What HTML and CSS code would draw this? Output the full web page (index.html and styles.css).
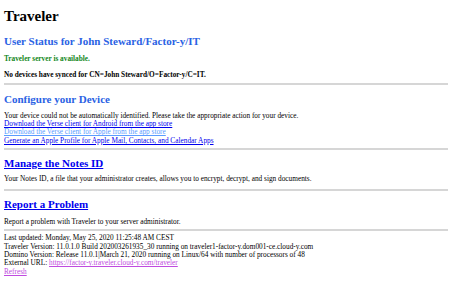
FILE: index.html
```html
<!DOCTYPE html>
<html>
<head>
<meta charset="utf-8">
<title>Traveler</title>
<link rel="stylesheet" href="styles.css">
</head>
<body class="page">
<h1 class="title">Traveler</h1>
<h2 class="section blue status">User Status for John Steward/Factor-y/IT</h2>
<h4 class="note green avail">Traveler server is available.</h4>
<h4 class="note synced">No devices have synced for CN=John Steward/O=Factor-y/C=IT.</h4>
<hr class="rule r1">
<h2 class="section blue after-rule">Configure your Device</h2>
<div class="text t-config">Your device could not be automatically identified. Please take the appropriate action for your device.<br>
<a class="link" href="#">Download the Verse client for Android from the app store</a><br>
<a class="link light" href="#">Download the Verse client for Apple from the app store</a><br>
<a class="link" href="#">Generate an Apple Profile for Apple Mail, Contacts, and Calendar Apps</a></div>
<hr class="rule r2">
<h2 class="section after-rule m-notes"><a class="link" href="#">Manage the Notes ID</a></h2>
<div class="text t-notes">Your Notes ID, a file that your administrator creates, allows you to encrypt, decrypt, and sign documents.</div>
<hr class="rule r3">
<h2 class="section after-rule m-report"><a class="link" href="#">Report a Problem</a></h2>
<div class="text t-report">Report a problem with Traveler to your server administrator.</div>
<hr class="rule r4">
<div class="text t-footer">Last updated: Monday, May 25, 2020 11:25:48 AM CEST<br>
Traveler Version: 11.0.1.0 Build 202003261935_30 running on traveler1-factor-y.dom001-ce.cloud-y.com<br>
Domino Version: Release 11.0.1|March 21, 2020 running on Linux/64 with number of processors of 48<br>
External URL: <a class="link visited" href="#">https://factor-y.traveler.cloud-y.com/traveler</a><br>
<a class="link visited" href="#">Refresh</a></div>
</body>
</html>
```
FILE: styles.css
```css
html { background: #fff; }
.page {
  margin: 0;
  padding: 0 4px;
  font-family: "Liberation Serif", "Times New Roman", serif;
  font-size: 7.3px;
  color: #000;
}
.page > * { margin-bottom: 0; }
.title {
  font-size: 15px;
  line-height: 17px;
  font-weight: bold;
  margin-top: 8.4px;
}
.section {
  font-size: 11px;
  line-height: 13px;
  font-weight: bold;
}
.status { margin-top: 9.6px; }
.after-rule { margin-top: 7.4px; }
.m-notes { margin-top: 6.6px; }
.m-report { margin-top: 7.3px; }
.blue { color: #2a62e4; }
.note {
  font-size: 7.3px;
  line-height: 8.4px;
  font-weight: bold;
}
.avail { margin-top: 7.5px; }
.synced { margin-top: 7.1px; }
.green { color: #12871a; }
.rule {
  border: 0;
  height: 2px;
  background: #d6d6d6;
}
.r1 { margin-top: 3.9px; }
.r2 { margin-top: 3.2px; }
.r3 { margin-top: 5.1px; }
.r4 { margin-top: 2.8px; }
.text { line-height: 8.4px; }
.t-config { margin-top: 6px; }
.t-notes { margin-top: 5.2px; }
.t-report { margin-top: 6.5px; }
.t-footer { margin-top: 3.5px; }
.link { color: #0000ee; text-decoration: underline; }
.light { color: #5a9cff; }
.visited { color: #c04be0; }
```
